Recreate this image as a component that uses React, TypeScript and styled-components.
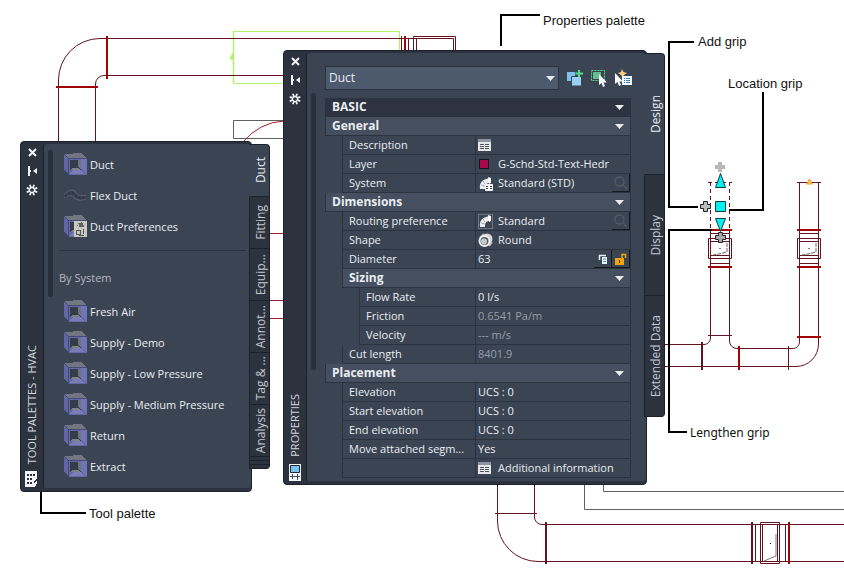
import React, { useState } from "react";
import styled, { createGlobalStyle, css } from "styled-components";

const c = {
  edge: "#1c212b",
  rail: "#2c333f",
  body: "#3b4453",
  header: "#454f60",
  headerDark: "#2d3340",
  field: "#4d596c",
  line: "#2b3341",
  strip: "#27303b",
  text: "#e9edf2",
  muted: "#969da8",
  dark: "#641420",
  red: "#a00508",
};

const Global = createGlobalStyle`
  *, *::before, *::after { box-sizing: border-box; }
  body { margin: 0; background: #fff; font: 12px/16px "Open Sans", "Noto Sans", sans-serif; }
  button, input, select { font: inherit; color: inherit; border: 0; background: none; padding: 0; margin: 0; }
  svg { display: block; flex: none; }
`;

const Canvas = styled.main`
  position: relative;
  min-height: 100vh;
  overflow: hidden;
`;
const Drawing = styled.svg`
  min-width: 844px;
`;
const Callout = styled.span<{ $x: number; $y: number; $humanist?: boolean }>`
  position: absolute;
  left: ${(p) => p.$x}px;
  top: ${(p) => p.$y}px;
  color: #111;
  white-space: nowrap;
  font: 13px/16px "Liberation Sans", Arial, sans-serif;
  ${(p) => p.$humanist && css`font: 12px/16px "Noto Sans", sans-serif;`}
`;

const Palette = styled.section<{ $x: number; $y: number }>`
  position: absolute;
  left: ${(p) => p.$x}px;
  top: ${(p) => p.$y}px;
  display: flex;
  align-items: flex-start;
  color: ${c.text};
`;
const Frame = styled.div`
  display: flex;
  align-self: stretch;
  background: ${c.rail};
  border: 1px solid ${c.edge};
  border-radius: 4px;
  padding: 2px 0 3px;
`;
const Rail = styled.header`
  width: 22px;
  display: flex;
  flex-direction: column;
  align-items: center;
  gap: 7px;
  padding-top: 2px;
`;
const RailButton = styled.button`
  width: 16px;
  height: 12px;
  display: grid;
  place-items: center;
`;
const RailTitle = styled.h2`
  margin: auto 0 0;
  font-size: 11px;
  font-weight: 400;
  line-height: 16px;
  color: #d3d7dd;
  writing-mode: vertical-rl;
  transform: rotate(180deg);
  white-space: nowrap;
`;
const Content = styled.div<{ $w: number }>`
  width: ${(p) => p.$w}px;
  display: flex;
  background: ${c.body};
  border-left: 1px solid ${c.edge};
  border-radius: 3px 0 2px 2px;
`;
const ScrollThumb = styled.div<{ $top: number; $h: number }>`
  flex: none;
  width: 5px;
  height: ${(p) => p.$h}px;
  margin: ${(p) => p.$top}px 0 0 4px;
  border-radius: 2px;
  background: ${c.strip};
`;
const Tabs = styled.div`
  position: relative;
  margin: 3px 0 0 -3px;
  width: 21px;
  display: flex;
  flex-direction: column;
  border-right: 1px solid ${c.edge};
  border-top: 1px solid ${c.edge};
  border-radius: 0 4px 4px 0;
  overflow: hidden;
  background: ${c.rail};
`;
const Tab = styled.button<{ $h: number }>`
  height: ${(p) => p.$h}px;
  display: grid;
  place-items: center;
  padding-left: 2px;
  color: #c3c8d0;
  border-left: 1px solid ${c.edge};
  border-bottom: 1px solid ${c.edge};
  &[aria-selected="true"] {
    background: ${c.body};
    color: ${c.text};
    border-left-color: ${c.body};
  }
  span {
    writing-mode: vertical-rl;
    transform: rotate(180deg);
    white-space: nowrap;
  }
`;
const TabStack = styled.i`
  height: 4px;
  border-left: 1px solid ${c.edge};
  border-bottom: 1px solid ${c.edge};
`;

const ToolList = styled.div`
  flex: 1;
  padding: 5px 5px 6px 6px;
`;
const Tool = styled.button`
  height: 31px;
  width: 100%;
  display: flex;
  align-items: center;
  gap: 3px;
  padding-left: 5px;
  white-space: nowrap;
  font-size: 11px;
`;
const GroupTitle = styled.h3`
  margin: 8px 0 0;
  padding: 19px 0 10px;
  border-top: 1px solid ${c.line};
  font-size: 11px;
  line-height: 16px;
  font-weight: 400;
  color: #b9b6c0;
`;

const Props = styled.div`
  flex: 1;
  padding: 13px 16px 3px 9px;
`;
const TopBar = styled.div`
  display: flex;
  align-items: center;
  gap: 8px;
`;
const ComboBox = styled.div`
  position: relative;
  width: 234px;
  height: 24px;
  background: ${c.field};
  border: 1px solid ${c.line};
  select {
    width: 100%;
    height: 100%;
    padding-left: 3px;
    appearance: none;
  }
  svg {
    position: absolute;
    right: 3px;
    top: 9px;
    pointer-events: none;
  }
`;
const IconButton = styled.button`
  width: 16px;
  height: 18px;
`;
const Sheet = styled.table`
  width: 306px;
  margin-top: 8px;
  border-collapse: separate;
  border-spacing: 0;
  table-layout: fixed;
`;
const Indent = styled.col`
  width: 17px;
`;
const ValueCol = styled.col`
  width: 156px;
`;
const HeadCell = styled.th<{ $dark?: boolean }>`
  height: 19px;
  padding: 0;
  background: ${(p) => (p.$dark ? c.headerDark : c.header)};
  border: 1px solid ${c.line};
  border-top-width: 0;
  button {
    width: 100%;
    height: 18px;
    display: flex;
    align-items: center;
    justify-content: space-between;
    padding: 0 6px;
    font-weight: 700;
  }
`;
const Blank = styled.td`
  padding: 0;
  height: 19px;
`;
const NameCell = styled.th`
  height: 19px;
  padding: 0 2px 0 6px;
  overflow: hidden;
  white-space: nowrap;
  text-align: left;
  font-size: 11px;
  font-weight: 400;
  line-height: 18px;
  border-left: 1px solid ${c.line};
  border-bottom: 1px solid ${c.line};
`;
const ValueCell = styled.td`
  height: 19px;
  padding: 0;
  border: 1px solid ${c.line};
  border-top-width: 0;
`;
const ValueRow = styled.div`
  height: 18px;
  display: flex;
  align-items: center;
  gap: 5px;
  padding-left: 2px;
  white-space: nowrap;
  font-size: 11px;
`;
const IconSlot = styled.span`
  width: 15px;
  display: grid;
  justify-items: start;
`;
const ValueInput = styled.input`
  flex: 1;
  min-width: 0;
  height: 16px;
  &:read-only { color: ${c.muted}; }
`;
const EndButton = styled.button`
  width: 18px;
  height: 18px;
  display: grid;
  place-items: center;
  border-right: 1px solid #14181f;
  border-bottom: 1px solid #14181f;
`;
const End = styled.span`
  margin-left: auto;
  display: flex;
`;

const Arrow = () => (
  <svg width="9" height="5" viewBox="0 0 9 5"><path d="M0 0h9L4.500 5z" fill="#e8ecf1" /></svg>
);
const Close = () => (
  <svg width="9" height="9" viewBox="0 0 9 9"><path d="M1 1l7 7M8 1L1 8" stroke="#f1f3f6" strokeWidth="2" /></svg>
);
const AutoHide = () => (
  <svg width="9" height="10" viewBox="0 0 9 10"><path d="M0 0h2v10H0zM2 4h1v2H2zM9 2v6L5 5z" fill="#f1f3f6" /></svg>
);
const Gear = () => (
  <svg width="12" height="12" viewBox="-6 -6 12 12" fill="none" stroke="#f1f3f6">
    <circle r="2.500" strokeWidth="1.300" />
    {[0, 45, 90, 135, 180, 225, 270, 315].map((a) => (
      <path key={a} d="M3 0h2.700" strokeWidth="1.700" transform={`rotate(${a + 22.5})`} />
    ))}
  </svg>
);
const DuctIcon = ({ prefs }: { prefs?: boolean }) => (
  <svg width="23" height="23" viewBox="0 0 23 23" shapeRendering="crispEdges">
    <path d="M0 1h5v21L0 17z" fill="#6366a4" />
    <path d="M0 1L17 0l6 5H5z" fill="#727681" />
    <path d="M4 5h19v17H4z" fill="#6568a8" />
    <path d="M17 6h6v16l-6-6z" fill="#7174b6" />
    <path d="M6 21l3-4h8l3 4z" fill="#7a7db3" />
    <path d="M6 7h11v10H6z" fill="#333c48" />
    <path d="M14 7h3v10l-3-3z" fill="#6e747b" />
    <path d="M6 17l2-2h6l3 2z" fill="#7c8288" />
    <path d="M0 1l4 4h19M4 5v17" fill="none" stroke="#454a72" />
    {prefs && (
      <g>
        <path d="M10 6h13v16H10z" fill="#c9c7c2" />
        <circle cx="17" cy="10" r="2.500" fill="#5c5c5c" />
        <path d="M13 10h8M17 7v6M14 8l6 4" stroke="#666" strokeDasharray="1 1" />
        <path d="M12.500 15.500h4v4h-4zM19 14v5M15 20.500h5" fill="none" stroke="#555" />
      </g>
    )}
  </svg>
);
const FlexIcon = () => (
  <svg width="23" height="23" viewBox="0 0 23 23" fill="none">
    <path d="M0 11q4-5 8-5 3 0 5 4 3 3 9 1M0 14q4-3 7-2 2 0 4 3 5 3 11 0" stroke="#59606b" />
    <path d="M1 12.500q4-4 7-3.500 2 0 4 3 4 3 10 1" stroke="#2a323e" strokeWidth="2" strokeDasharray="2 2" />
  </svg>
);
const SheetIcon = () => (
  <svg width="13" height="12" viewBox="0 0 13 12">
    <path d="M0 0h13v12H0z" fill="#e5e6e8" /><path d="M0 0h13v3H0z" fill="#8d949f" />
    <path d="M2 5.500h4M7 5.500h4M2 7.500h4M7 7.500h4M2 9.500h4M7 9.500h4" stroke="#4a5260" />
  </svg>
);
const Swatch = () => (
  <svg width="13" height="12" viewBox="0 0 13 12"><rect x="1.500" y="1.500" width="9" height="9" fill="#a8074b" stroke="#17151b" /></svg>
);
const ElbowIcon = ({ grid }: { grid?: boolean }) => (
  <svg width="15" height="15" viewBox="0 0 15 15">
    {!grid && <rect x=".5" y=".5" width="14" height="14" fill="none" stroke="#6b7482" />}
    <path d="M2 13C1 6 5 3 12 2v5C8 7 7 9 7 13z" fill="#eceeef" />
    <path d="M5 5l2 3M3 9l4 1" fill="none" stroke="#a9adb2" />
    <path d="M10 1l3 1v5l-2 1z" fill="#fff" />
    {grid && (
      <g>
        <path d="M7.500 8.500h7v6h-7z" fill="#f4f5f6" stroke="#f4f5f6" />
        <path d="M8 10.500h2M12 10.500h2M8 12.500h2M12 12.500h2" stroke="#3b4453" />
      </g>
    )}
  </svg>
);
const RoundIcon = () => (
  <svg width="15" height="15" viewBox="0 0 15 15">
    <circle cx="9" cy="6" r="5.500" fill="#d7d8d9" />
    <path d="M2 5l4-4M11 13l3-4" stroke="#bfc1c4" strokeWidth="2" />
    <circle cx="6.500" cy="8" r="5" fill="#5b6066" stroke="#f2f2f2" strokeWidth="2" />
    <circle cx="6" cy="8.500" r="3" fill="#c6c8ca" />
  </svg>
);
const Lens = () => (
  <svg width="13" height="13" viewBox="0 0 13 13" fill="none" stroke="#525a67" strokeWidth="1.300">
    <circle cx="5.500" cy="5.500" r="4.500" /><path d="M9 9l4 4" />
  </svg>
);
const LinkIcon = () => (
  <svg width="10" height="10" viewBox="0 0 10 10">
    <path d="M1.500 6V1.500H8" fill="none" stroke="#e9edf2" strokeWidth="1.500" />
    <path d="M4 3h5v7H4z" fill="#e9f6ff" /><path d="M5 5h3M5 7.500h3" stroke="#3d91c9" />
  </svg>
);
const Unlock = () => (
  <svg width="12" height="12" viewBox="0 0 12 12">
    <path d="M0 5h9v7H0z" fill="#f0a30e" /><path d="M7 5V1.500h3.500V5" fill="none" stroke="#f0a30e" strokeWidth="1.500" /><path d="M4 7h1v3H4z" fill="#4b3c1c" />
  </svg>
);
const AddSetIcon = () => (
  <svg width="16" height="16" viewBox="0 0 16 16">
    <path d="M0 2h9v9H0z" fill="#7fc0ea" />
    <path d="M4.500 6.500h10V16h-10z" fill="#98d0f5" stroke="#3b4453" />
    <path d="M8 0h8v7H8z" fill="#3b4453" /><path d="M12 0v7M8.500 3.500H16" stroke="#4fdf8c" strokeWidth="2" />
  </svg>
);
const CursorPath = "M0 0v11l2.500-2 1.500 4 2-1-1.500-3.500H8z";
const SelectIcon = () => (
  <svg width="16" height="18" viewBox="0 0 16 18">
    <path d="M.5 1.500h13v10H.5z" fill="none" stroke="#57d98d" strokeDasharray="2 1" />
    <path d="M2 3h8v7H2z" fill="#63be8b" /><path d={CursorPath} transform="translate(8 5)" fill="#f5f7f9" />
  </svg>
);
const QuickIcon = () => (
  <svg width="17" height="18" viewBox="0 0 17 18">
    <path d={CursorPath} transform="translate(0 4)" fill="#f5f7f9" />
    <path d="M7 0l1.500 3L12 4 9 6 8 9 6 6 3 4l3-1z" fill="#f6cf7d" />
    <path d="M7 7h10v9H7z" fill="#f4f8fa" /><path d="M9 9.500h1M11 9.500h4M9 11.500h1M11 11.500h4M9 13.500h1M11 13.500h4" stroke="#3284ba" />
  </svg>
);
const ToolMark = () => (
  <svg width="14" height="17" viewBox="0 0 14 17" shapeRendering="crispEdges">
    <path d="M0 0h12v7l-3 4v5H0z" fill="#f3f4f6" />
    <path d="M2 3h2v2H2zM5 3h2v2H5zM8 3h2v2H8zM2 7h2v2H2zM5 7h2v2H5zM2 11h2v2H2zM5 11h2v2H5z" fill="#2c333f" />
    <path d="M9 16v-4l3-3v3l-2 4z" fill="#f3f4f6" />
  </svg>
);
const PropsMark = () => (
  <svg width="12" height="17" viewBox="0 0 12 17">
    <path d="M0 0h12v17H0z" fill="#f3f4f6" /><path d="M1.500 1.500h9v7h-9z" fill="#75c5f0" stroke="#202b38" />
    <path d="M1 12.500h10M3.500 10v5M8.500 10v6" stroke="#46505e" />
  </svg>
);

const plus = (x: number, y: number) =>
  `M${x - 2} ${y - 5}h4v3h3v4h-3v3h-4v-3h-3v-4h3z`;

const DuctPlan = () => (
  <Drawing width="844" height="580" viewBox="0 0 844 580" fill="none" stroke={c.dark} aria-hidden="true">
    <g stroke="#b4f16a">
      <path d="M399.500 50V31.500H233.500v52H290" /><path d="M233.500 31v52" strokeWidth="1.500" /><path d="M230 59l3-6v6z" fill="#b4f16a" />
    </g>
    <path d="M290 120.500H233.500v18H290" stroke="#5f6265" />
    <path d="M243 142Q260 122 284 121" stroke="#a3212c" />
    <path d="M58.500 142V80A41.500 41.500 0 0 1 100 38.500H453.500V51M95.500 142V84A8.500 8.500 0 0 1 104 75.500H290" />
    <path d="M401.500 36v15M408.500 38v13M416.500 38v13M413.500 51V36.500h42V51" />
    <path d="M405 36v15M107 36v43M56 87h42" stroke={c.red} strokeWidth="2" />
    <path d="M270 233.500h14M270 300.500h14M270 318.500h14" stroke="#a3212c" />

    <path d="M708 182.500h24M710.500 182v48M729.500 182v48" strokeDasharray="4 3" />
    <path d="M710.500 230v108a6.500 6.500 0 0 1-6.500 6.500H665M729.500 230v111a7.500 7.500 0 0 0 7.500 7.500h56a6.500 6.500 0 0 0 6.500-6.500V182.500M797 182.500h24M818.500 182v162a22.500 22.500 0 0 1-22.500 22.500H665" />
    {[708.5, 797.5].map((x) => (
      <g key={x}>
        <path d={`M${x + 2} 233.500h19M${x} 238.500h23v20h-23zM${x + 2} 241.500h19v14h-19zM${x + 2} 263.500h19`} />
        <path d={`M${x - 0.5} 230h24M${x - 0.5} 267h24`} stroke={c.red} strokeWidth="2" />
        <path d={`M${x + 18.500} 243v9l-8 2-6 1`} stroke="#666" strokeDasharray="4 1" />
        <path d={`M${x + 11} 248.500h1`} stroke="#000" />
      </g>
    ))}
    <path d="M708 335.500h24M788.500 346v24" />
    <path d="M702 342v28" strokeWidth="2" /><path d="M739 346v24M797 337h24" stroke={c.red} strokeWidth="2" />
    <path d="M806.500 184l3-5 3 5z" fill="#f6c65c" stroke="#ef982e" />

    <path d="M584.500 480v29.500H844M603.500 480v11.500H844" stroke="#5f6265" />
    <path d="M497.500 480v41a40.500 40.500 0 0 0 40.500 40.500H844M534.500 480v37a7.500 7.500 0 0 0 7.500 7.500H844M495 513.500h42" />
    <path d="M546 522v42M752 522v42" strokeWidth="2" /><path d="M789 522v42" stroke={c.red} strokeWidth="2" />
    <path d="M755.500 524v38M785.500 524v38M760.500 522.500h19v41h-19zM762.500 524.500h15v37h-15z" />
    <path d="M776 534v22l-12 5" stroke="#777" /><path d="M770 543.500h1" stroke="#000" />

    <path d="M501 46V15h39M694 42h-25v165h29M763 92v118h-34M712 230h-43v202h18M41 491v22h45" stroke="#000" strokeWidth="2" />

    <path d={plus(720, 167)} fill="#b9b9b9" stroke="none" />
    <path d="M720.500 173.500l5 14h-10zM715.500 201.500h10v10h-10zM715.500 218.500h10l-5 13z" fill="#00f2f2" stroke="#173c40" />
    <path d={plus(705.5, 206.5)} fill="#bdbdbd" stroke="#222" />
    <path d={plus(720.5, 237.5)} fill="#a9a9a9" stroke="#222" />
  </Drawing>
);

type TabInfo = { label: string; h: number };
const TabStrip = ({ tabs, name, stack = 0 }: { tabs: TabInfo[]; name: string; stack?: number }) => {
  const [active, setActive] = useState(0);
  return (
    <Tabs role="tablist" aria-label={name} aria-orientation="vertical">
      {tabs.map((t, i) => (
        <Tab key={t.label} role="tab" $h={t.h} aria-selected={i === active} onClick={() => setActive(i)}>
          <span>{t.label}</span>
        </Tab>
      ))}
      {Array.from({ length: stack }, (_, i) => <TabStack key={i} />)}
    </Tabs>
  );
};

const SideRail = ({ title, mark }: { title: string; mark: React.ReactNode }) => (
  <Rail>
    <RailButton aria-label="Close"><Close /></RailButton>
    <RailButton aria-label="Auto-hide"><AutoHide /></RailButton>
    <RailButton aria-label="Palette settings"><Gear /></RailButton>
    <RailTitle>{title}</RailTitle>
    {mark}
  </Rail>
);

const systems = ["Fresh Air", "Supply - Demo", "Supply - Low Pressure", "Supply - Medium Pressure", "Return", "Extract"];
const toolTabs = ["Duct", "Fitting", "Equip...", "Annot...", "Tag & ...", "Analysis"].map((label) => ({ label, h: 52 }));
const propTabs = ["Design", "Display", "Extended Data"].map((label) => ({ label, h: 121 }));

const Section = ({ title, dark, nested }: { title: string; dark?: boolean; nested?: boolean }) => (
  <tr>
    {nested && <Blank />}
    <HeadCell colSpan={nested ? 3 : 4} $dark={dark}>
      <button aria-expanded="true">{title}<Arrow /></button>
    </HeadCell>
  </tr>
);

const Property = ({ name, icon, value, input, readOnly, nested, end }: {
  name: string; icon?: React.ReactNode; value?: string; input?: boolean; readOnly?: boolean; nested?: boolean; end?: React.ReactNode;
}) => (
  <tr>
    <Blank colSpan={nested ? 2 : 1} />
    <NameCell scope="row" colSpan={nested ? 1 : 2}>{name}</NameCell>
    <ValueCell>
      <ValueRow>
        {icon && <IconSlot>{icon}</IconSlot>}
        {input ? <ValueInput aria-label={name} defaultValue={value} readOnly={readOnly} /> : value}
        {end && <End>{end}</End>}
      </ValueRow>
    </ValueCell>
  </tr>
);

const search = <EndButton aria-label="Browse styles"><Lens /></EndButton>;

export default function App() {
  return (
    <Canvas>
      <Global />
      <DuctPlan />
      <Callout $x={543} $y={13}>Properties palette</Callout>
      <Callout $x={698} $y={34}>Add grip</Callout>
      <Callout $x={728} $y={76}>Location grip</Callout>
      <Callout $x={690} $y={425} $humanist>Lengthen grip</Callout>
      <Callout $x={89} $y={506}>Tool palette</Callout>

      <Palette $x={20} $y={141} aria-label="Tool palettes">
        <Frame>
          <SideRail title="TOOL PALETTES - HVAC" mark={<ToolMark />} />
          <Content $w={208}>
            <ScrollThumb $top={6} $h={147} />
            <ToolList>
              <Tool><DuctIcon />Duct</Tool>
              <Tool><FlexIcon />Flex Duct</Tool>
              <Tool><DuctIcon prefs />Duct Preferences</Tool>
              <GroupTitle>By System</GroupTitle>
              {systems.map((s) => <Tool key={s}><DuctIcon />{s}</Tool>)}
            </ToolList>
          </Content>
        </Frame>
        <TabStrip name="Tool groups" tabs={toolTabs} stack={3} />
      </Palette>

      <Palette $x={283} $y={50} aria-label="Properties">
        <Frame>
          <SideRail title="PROPERTIES" mark={<PropsMark />} />
          <Content $w={340}>
            <ScrollThumb $top={40} $h={277} />
            <Props>
              <TopBar>
                <ComboBox>
                  <select aria-label="Object type" defaultValue="Duct"><option>Duct</option></select>
                  <Arrow />
                </ComboBox>
                <IconButton aria-label="Add selected"><AddSetIcon /></IconButton>
                <IconButton aria-label="Select objects"><SelectIcon /></IconButton>
                <IconButton aria-label="Quick select"><QuickIcon /></IconButton>
              </TopBar>
              <Sheet>
                <colgroup><Indent /><Indent /><col /><ValueCol /></colgroup>
                <tbody>
                  <Section title="BASIC" dark />
                  <Section title="General" />
                  <Property name="Description" icon={<SheetIcon />} />
                  <Property name="Layer" icon={<Swatch />} value="G-Schd-Std-Text-Hedr" />
                  <Property name="System" icon={<ElbowIcon grid />} value="Standard (STD)" end={search} />
                  <Section title="Dimensions" />
                  <Property name="Routing preference" icon={<ElbowIcon />} value="Standard" end={search} />
                  <Property name="Shape" icon={<RoundIcon />} value="Round" />
                  <Property
                    name="Diameter"
                    value="63"
                    input
                    end={<><EndButton aria-label="Pick size"><LinkIcon /></EndButton><EndButton aria-label="Unlock"><Unlock /></EndButton></>}
                  />
                  <Section title="Sizing" nested />
                  <Property name="Flow Rate" value="0 l/s" input nested />
                  <Property name="Friction" value="0.6541 Pa/m" input readOnly nested />
                  <Property name="Velocity" value="--- m/s" input readOnly nested />
                  <Property name="Cut length" value="8401.9" input readOnly />
                  <Section title="Placement" />
                  <Property name="Elevation" value="UCS : 0" input />
                  <Property name="Start elevation" value="UCS : 0" input />
                  <Property name="End elevation" value="UCS : 0" input />
                  <Property name="Move attached segm..." value="Yes" />
                  <Property name="" icon={<SheetIcon />} value="Additional information" />
                </tbody>
              </Sheet>
            </Props>
          </Content>
        </Frame>
        <TabStrip name="Property tabs" tabs={propTabs} />
      </Palette>
    </Canvas>
  );
}
